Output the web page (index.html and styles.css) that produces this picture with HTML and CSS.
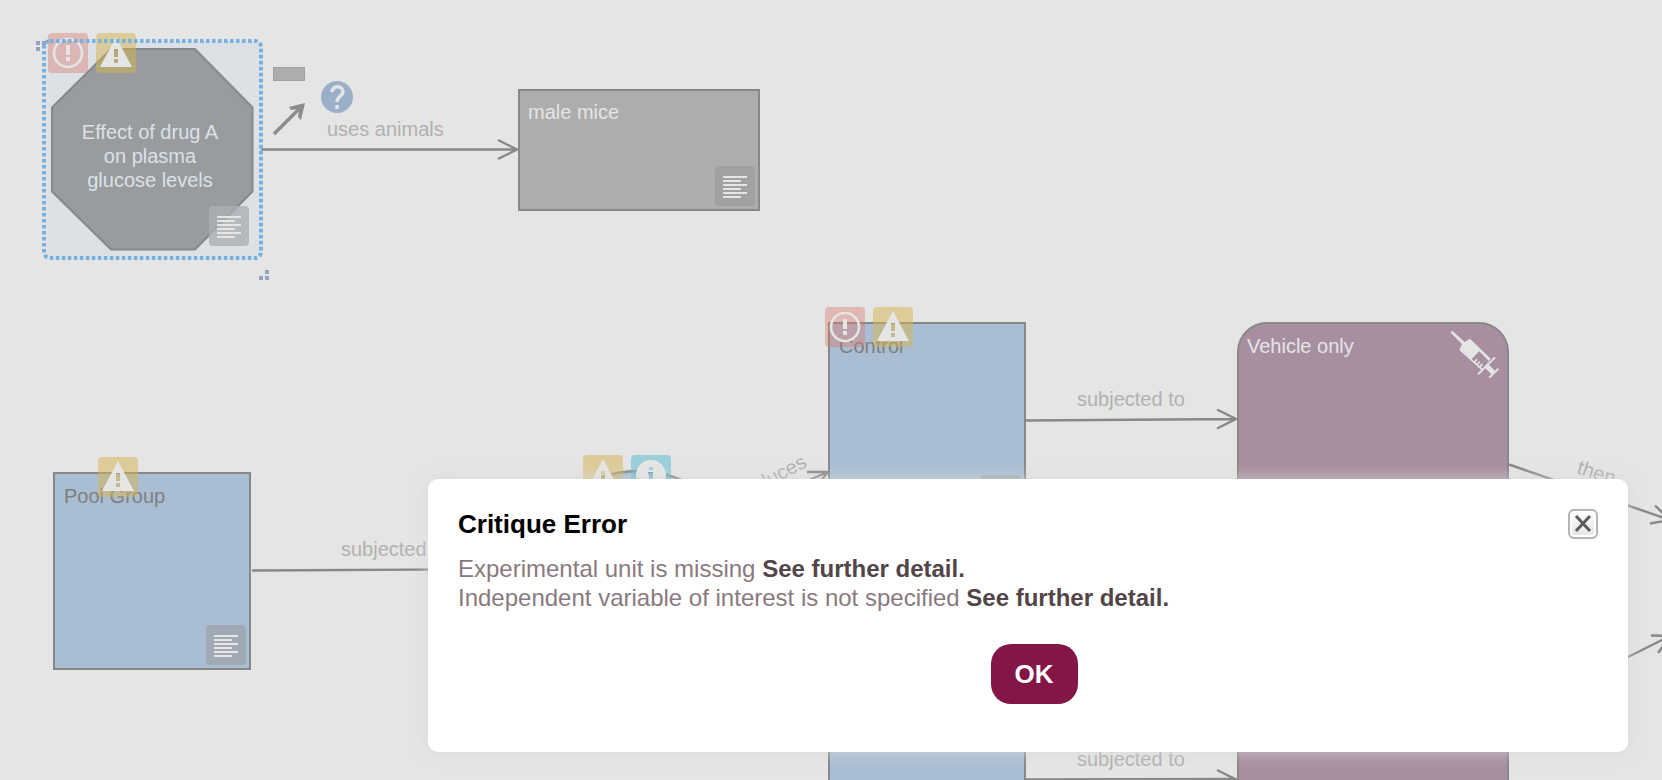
FILE: index.html
```html
<!DOCTYPE html>
<html lang="en">
<head>
<meta charset="utf-8">
<title>Critique Error</title>
<link rel="stylesheet" href="styles.css">
</head>
<body>
<svg class="symbols" aria-hidden="true">
  <symbol id="error" viewBox="0 0 40 40">
    <circle cx="20" cy="20" r="14" fill="none" stroke="#e5e5e5" stroke-width="2.6"/>
    <path d="M18 12h4v10h-4zM18 24h4v4h-4z" fill="#e5e5e5"/>
  </symbol>
  <symbol id="warning" viewBox="0 0 40 40">
    <path fill-rule="evenodd" d="M20 4L36 34H4zM18 16v8h4v-8zM18 26v4h4v-4z" fill="#e5e5e5"/>
  </symbol>
  <symbol id="info" viewBox="0 0 40 40">
    <path fill-rule="evenodd" d="M20 5a15 15 0 1 0 0 30a15 15 0 1 0 0-30zM18 12h4v3h-4zM17 17h5v9h2v3h-7v-3h1v-6h-1z" fill="#e5e5e5"/>
  </symbol>
  <symbol id="notes" viewBox="0 0 40 40">
    <path d="M8 11h24M8 15h18M8 19h24M8 23h18M8 27h24M8 31h18" stroke="#e5e5e5" stroke-width="2"/>
  </symbol>
</svg>

<main class="canvas">
  <svg class="edges" aria-hidden="true">
    <g fill="none" stroke="#888" stroke-width="2.400">
      <ellipse cx="638" cy="569" rx="104" ry="98" fill="#aabed3"/>
      <path d="M253 149.500H517M498 140l19 9.500l-19 9.500"/>
      <path d="M252 570.500L534 569"/>
      <path d="M1026 420.500L1236 419M1217 409.500l19 9.500l-19 9.500"/>
      <path d="M1026 779.500L1236 779M1217 770l19 9.500l-19 9.500"/>
      <path d="M728 514L828 472M807 472H828L815 488"/>
      <path d="M1509 464.500L1670 520M1655 505.500L1670 520L1650 523.500"/>
      <path d="M1628 657L1670 636M1651 635.500L1670 636L1658 653"/>
    </g>
    <g class="edge-label">
      <text x="327" y="136">uses animals</text>
      <text x="341" y="556">subjected to</text>
      <text x="1077" y="406">subjected to</text>
      <text x="1077" y="766">subjected to</text>
      <text text-anchor="end" transform="translate(808 466) rotate(-28)">produces</text>
      <text transform="translate(1576 473) rotate(18)">then</text>
    </g>
  </svg>

  <section class="node experiment">
    <svg class="octagon" viewBox="0 0 222 222" aria-hidden="true">
      <rect x="2" y="2" width="217" height="217" rx="7" fill="#dde1e6"/>
      <path d="M69 10H153L210.500 68.500V152.500L153 210.500H69L10 152.500V68.500z" fill="#989c9f" stroke="#85898b" stroke-width="2"/>
    </svg>
    <p class="caption">Effect of drug A on plasma glucose levels</p>
  </section>
  <section class="node mice">male mice</section>
  <section class="node group pool">Pool Group</section>
  <section class="node group control">Control</section>
  <section class="node group treated"></section>
  <section class="node procedure vehicle">Vehicle only
    <svg class="syringe" viewBox="690 90 150 150" aria-hidden="true">
      <path fill-rule="evenodd" fill="#e5e5e5" d="M693 94L700 95L734 126L750 116L812 176L784 210L718 150L726 132L692 98zM778 154L755 177L762 184L769 176L773 179L766 187L770 191L777 183L781 187L774 194L778 198L785 190L789 194L782 202L788 205L807 184z"/>
      <path fill="none" stroke="#e5e5e5" stroke-width="6" d="M774 223L825 172M808 233L835 206"/>
      <path stroke="#e5e5e5" stroke-width="15" d="M798 196L820 218"/>
    </svg>
  </section>
  <section class="node procedure drug"></section>

  <svg class="badge note note-experiment"><use href="#notes"/></svg>
  <svg class="badge note note-mice"><use href="#notes"/></svg>
  <svg class="badge note note-pool"><use href="#notes"/></svg>
  <svg class="badge note note-control"><use href="#notes"/></svg>
  <svg class="badge error error-experiment"><use href="#error"/></svg>
  <svg class="badge warning warning-experiment"><use href="#warning"/></svg>
  <svg class="badge error error-control"><use href="#error"/></svg>
  <svg class="badge warning warning-control"><use href="#warning"/></svg>
  <svg class="badge warning warning-pool"><use href="#warning"/></svg>
  <svg class="badge warning warning-split"><use href="#warning"/></svg>
  <svg class="badge info info-split"><use href="#info"/></svg>

  <svg class="edges tools" aria-hidden="true">
    <rect x="44" y="41" width="217" height="217" rx="6" fill="none" stroke="#76b2e1" stroke-width="4" stroke-dasharray="3.600 2.400"/>
    <path fill="#93a2c0" d="M36 41h4v4h-4zM42 41h4v4h-4zM36 47h4v4h-4zM265 270h4v4h-4zM259 276h4v4h-4zM265 276h4v4h-4z"/>
    <rect x="273.500" y="67.500" width="31" height="13" fill="#adadad" stroke="#a0a0a0"/>
    <path fill="none" stroke="#8c8c8c" stroke-width="3.500" d="M274 134L302 106"/>
    <path fill="#8c8c8c" d="M305 103L301 120L298 117L299 109L291 110L289 107z"/>
    <circle cx="337" cy="97" r="16" fill="#9bafc8"/>
    <path fill="none" stroke="#e5e5e5" stroke-width="3.500" d="M332 92C332 85 343 85 343 92C343 96 337 96 337 102M337 105V109"/>
  </svg>
</main>

<div class="dialog" role="dialog" aria-labelledby="dialog-title">
  <header class="dialog-header">
    <h1 class="dialog-title" id="dialog-title">Critique Error</h1>
    <button class="close" type="button" aria-label="Close">
      <svg viewBox="0 0 26 26" aria-hidden="true"><path d="M6 5L20 20M20 5L6 20" stroke="#5c5c5c" stroke-width="3" fill="none"/></svg>
    </button>
  </header>
  <div class="messages">
    <p>Experimental unit is missing <a href="#unit">See further detail.</a></p>
    <p>Independent variable of interest is not specified <a href="#variable">See further detail.</a></p>
  </div>
  <div class="actions"><button class="ok" type="button">OK</button></div>
</div>
</body>
</html>
```

FILE: styles.css
```css
* { box-sizing: border-box; }

body {
  margin: 0;
  background: #e5e5e5;
  font-family: "Liberation Sans", Arial, sans-serif;
}

p, h1 { margin: 0; }

.symbols { position: absolute; width: 0; height: 0; }

/* Diagram */
.canvas {
  position: relative;
  height: 100vh;
  overflow: hidden;
  font-size: 20px;
  line-height: 24px;
}

.edges { position: absolute; inset: 0; width: 100%; height: 100%; }
.edge-label { fill: #b1b1b1; }

.node {
  position: absolute;
  padding: 10px 8px;
  border: 2px solid #888;
  color: #e5e5e5;
}

.experiment {
  left: 42px;
  top: 39px;
  width: 222px;
  height: 222px;
  display: flex;
  align-items: center;
  justify-content: center;
  padding: 12px 36px 0 30px;
  border: 0;
  color: #dde1e6;
}
.octagon { position: absolute; inset: 0; }
.caption { position: relative; text-align: center; }

.mice { left: 518px; top: 89px; width: 242px; height: 122px; padding-top: 9px; background: #adadad; }

.group { width: 198px; height: 198px; padding-left: 9px; background: #aabed3; color: #7f7f7f; }
.pool { left: 53px; top: 472px; }
.control { left: 828px; top: 322px; }
.treated { left: 828px; top: 682px; }

.procedure { width: 272px; height: 198px; border-radius: 30px; background: #a78fa1; }
.vehicle { left: 1237px; top: 322px; }
.drug { left: 1237px; top: 682px; }
.syringe { position: absolute; right: 7px; top: 6px; width: 50px; height: 50px; }

.badge { position: absolute; width: 40px; height: 40px; border-radius: 4px; }
.note { background: rgba(150, 150, 150, .5); }
.error { background: rgba(218, 118, 108, .4); }
.warning { background: rgba(214, 180, 80, .5); }
.info { background: rgba(80, 185, 208, .5); }

.note-experiment { left: 209px; top: 206px; background: rgba(172, 176, 179, .8); }
.note-mice { left: 715px; top: 166px; }
.note-pool { left: 206px; top: 625px; }
.note-control { left: 981px; top: 475px; }
.error-experiment { left: 48px; top: 33px; }
.warning-experiment { left: 96px; top: 33px; }
.error-control { left: 825px; top: 307px; }
.warning-control { left: 873px; top: 307px; }
.warning-pool { left: 98px; top: 457px; }
.warning-split { left: 583px; top: 455px; }
.info-split { left: 631px; top: 455px; }

/* Dialog */
.dialog {
  position: absolute;
  left: 428px;
  right: 34px;
  top: 479px;
  padding: 30px 30px 48px;
  border-radius: 10px;
  background: #fff;
  box-shadow: 0 0 16px rgba(215, 215, 215, .8);
}

.dialog-header {
  display: flex;
  align-items: center;
  justify-content: space-between;
}
.dialog-title { font-size: 26px; line-height: 30px; color: #000; }

.close {
  width: 30px;
  height: 30px;
  padding: 0;
  border: 2px solid #b4b4b4;
  border-radius: 6px;
  background: linear-gradient(#fff, #e4e4e4);
  box-shadow: inset 0 0 0 2px #fff;
}
.close svg { display: block; width: 26px; height: 26px; }

.messages {
  padding-top: 15px;
  font-size: 24px;
  line-height: 29px;
  color: #8a7a80;
}
.messages a { color: #514549; font-weight: bold; text-decoration: none; }

.actions {
  display: flex;
  justify-content: center;
  padding: 32px 0 0 12px;
}
.ok {
  height: 60px;
  padding: 0 24px;
  border: 0;
  border-radius: 20px;
  background: #831647;
  color: #fff;
  font: bold 26px "Liberation Sans", Arial, sans-serif;
}
```
